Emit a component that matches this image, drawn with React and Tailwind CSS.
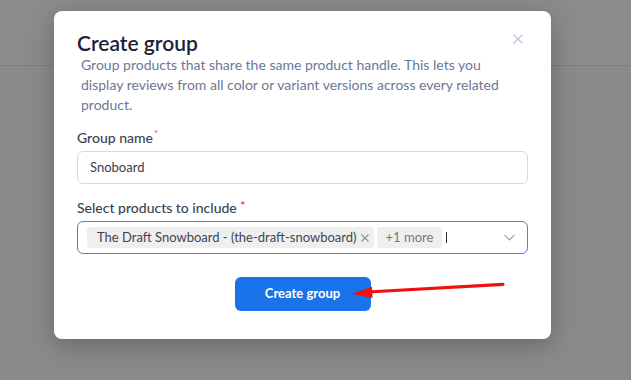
import React from "react";

export default function App() {
  return (
    <div className="relative w-[631px] h-[380px] overflow-hidden bg-[#898a8b]" style={{ fontFamily: "Lato, 'Noto Sans', sans-serif" }}>
      <div className="h-[66px] border-b border-[#7e7f80] bg-[#8b8b8c]" />
      <div className="absolute left-[54px] top-[11px] w-[497px] h-[328px] bg-white rounded-[8px] shadow-[0_6px_24px_rgba(0,0,0,0.25)] pt-[19px] pl-[23px] pr-[23px] flex flex-col">
        <div className="flex items-start justify-between">
          <h2 className="text-[21px] leading-[26px] font-semibold text-[#1c2233]">Create group</h2>
          <button className="mt-[4px] mr-[5px] w-[10px] h-[10px] text-[#b7c3e3]">
            <svg width="10" height="10" viewBox="0 0 10 10" fill="none" stroke="currentColor" strokeWidth="1.2">
              <path d="M0.5 0.5 L9.5 9.5 M9.5 0.5 L0.5 9.5" />
            </svg>
          </button>
        </div>
        <p className="ml-[4px] mt-[-1px] text-[14px] leading-[20px] text-[#6b7896] pr-[20px]">
          Group products that share the same product handle. This lets you display reviews from all color or variant versions across every related product.
        </p>
        <div className="mt-[14px] flex flex-col gap-[4px]">
          <div className="text-[14px] leading-[18px] font-medium text-[#3c4350]">
            Group name<span className="align-super text-[#e5484d] text-[10px] leading-[0] ml-[1px]">*</span>
          </div>
          <div className="h-[33px] border border-[#d6d8dc] rounded-[6px] px-[12px] flex items-center text-[13px] text-[#3a404b]">
            Snoboard
          </div>
        </div>
        <div className="mt-[15px] flex flex-col gap-[4px]">
          <div className="text-[14px] leading-[18px] font-medium text-[#3c4350]">
            Select products to include <span className="align-[3px] text-[#e11d2a] text-[12px] leading-[0]">*</span>
          </div>
          <div className="h-[33px] border border-[#3b86f0] rounded-[6px] pl-[9px] pr-[12px] flex items-center gap-[3px] text-[13px]">
            <span className="h-[21px] bg-[#efefef] rounded-[3px] pl-[10px] pr-[5px] flex items-center gap-[4px] text-[#3f4550]">
              The Draft Snowboard - (the-draft-snowboard)
              <svg width="8" height="8" viewBox="0 0 8 8" fill="none" stroke="#8a8f98" strokeWidth="1.1">
                <path d="M0.5 0.5 L7.5 7.5 M7.5 0.5 L0.5 7.5" />
              </svg>
            </span>
            <span className="h-[21px] bg-[#efefef] rounded-[3px] px-[9px] flex items-center text-[#727884]">+1 more</span>
            <span className="ml-[1px] w-[1px] h-[11px] bg-[#2a2f38]" />
            <svg className="ml-auto" width="11" height="7" viewBox="0 0 11 7" fill="none" stroke="#9aa0a8" strokeWidth="1.1">
              <path d="M0.5 0.8 L5.5 6 L10.5 0.8" />
            </svg>
          </div>
        </div>
        <div className="mt-[23px] flex justify-center">
          <button className="w-[136px] h-[34px] rounded-[6px] bg-[#1a73e8] text-white text-[13px] font-bold">
            Create group
          </button>
        </div>
      </div>
      <svg className="absolute left-0 top-0" width="631" height="380" viewBox="0 0 631 380">
        <line x1="503" y1="284.3" x2="368" y2="292" stroke="#f01010" strokeWidth="3.2" strokeLinecap="round" />
        <polygon points="351.5,293.8 372,286.8 372.5,298" fill="#f01010" />
      </svg>
    </div>
  );
}
